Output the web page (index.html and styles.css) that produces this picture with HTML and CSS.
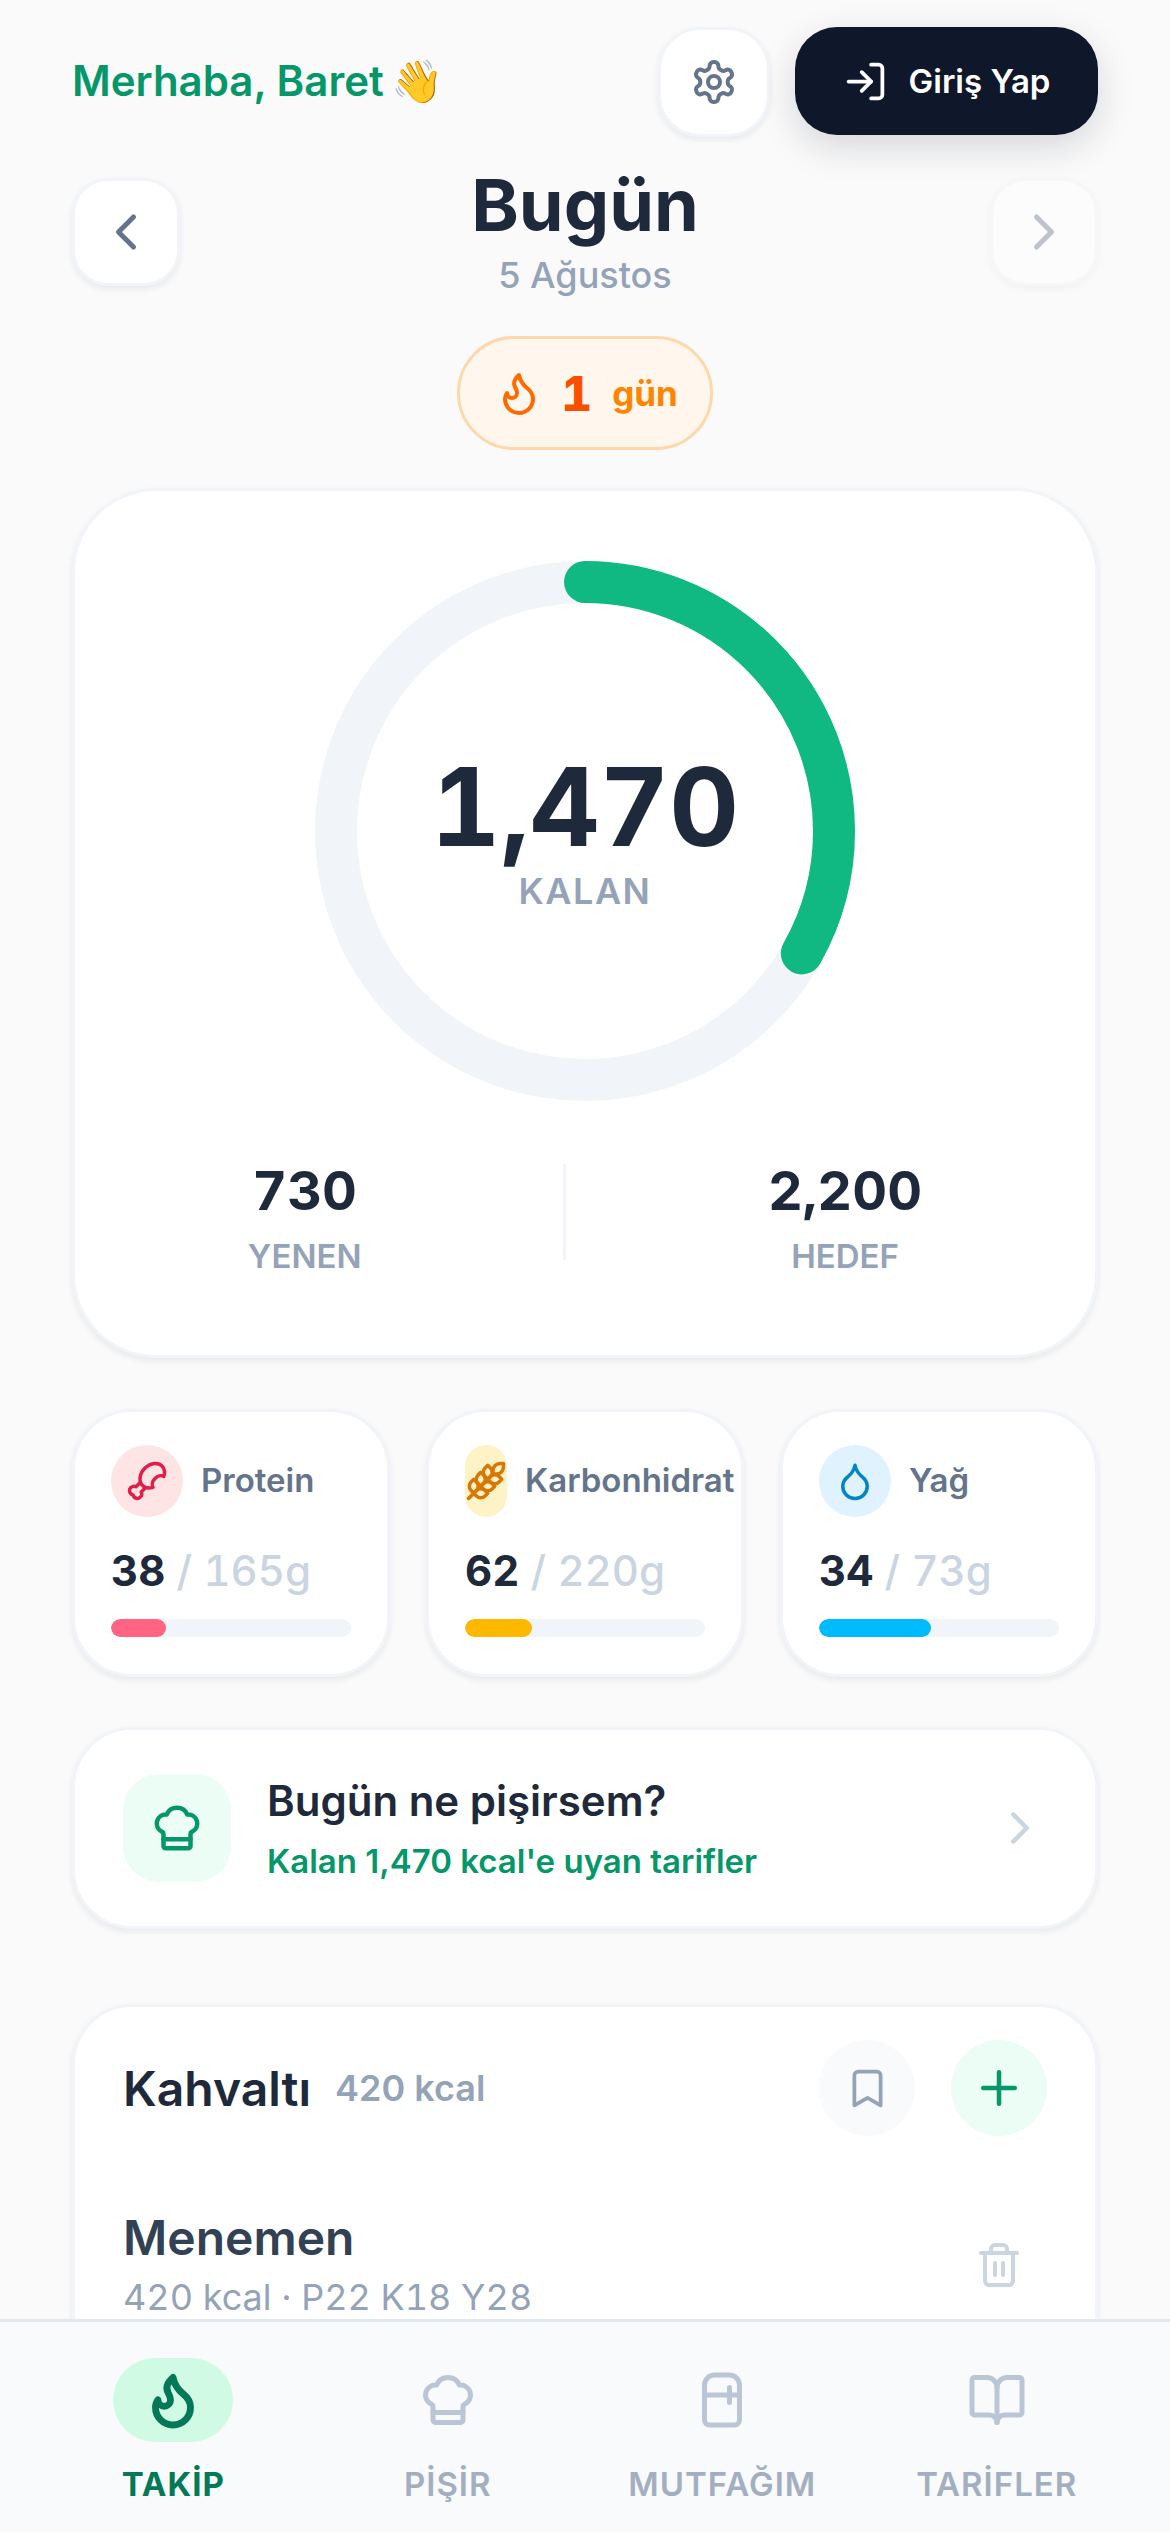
FILE: index.html
```html
<!DOCTYPE html>
<html lang="tr">
<head>
    <meta charset="UTF-8">
    <meta name="viewport" content="width=device-width, initial-scale=1.0">
    <title>Bugün</title>
    <link rel="stylesheet" href="styles.css">
</head>
<body>
    <main class="page">
        <header class="top">
            <div class="greeting">Merhaba, Baret <span class="wave">👋</span></div>
            <button class="settings-btn">
                <svg class="ico" width="48" height="48" viewBox="0 0 24 24"><path d="M12.22 2h-.44a2 2 0 0 0-2 2v.18a2 2 0 0 1-1 1.73l-.43.25a2 2 0 0 1-2 0l-.15-.08a2 2 0 0 0-2.73.73l-.22.38a2 2 0 0 0 .73 2.73l.15.1a2 2 0 0 1 1 1.72v.51a2 2 0 0 1-1 1.74l-.15.09a2 2 0 0 0-.73 2.73l.22.38a2 2 0 0 0 2.73.73l.15-.08a2 2 0 0 1 2 0l.43.25a2 2 0 0 1 1 1.73V20a2 2 0 0 0 2 2h.44a2 2 0 0 0 2-2v-.18a2 2 0 0 1 1-1.73l.43-.25a2 2 0 0 1 2 0l.15.08a2 2 0 0 0 2.73-.73l.22-.39a2 2 0 0 0-.73-2.73l-.15-.08a2 2 0 0 1-1-1.74v-.5a2 2 0 0 1 1-1.74l.15-.09a2 2 0 0 0 .73-2.73l-.22-.38a2 2 0 0 0-2.73-.73l-.15.08a2 2 0 0 1-2 0l-.43-.25a2 2 0 0 1-1-1.73V4a2 2 0 0 0-2-2z"/><circle cx="12" cy="12" r="3"/></svg>
            </button>
            <button class="login-btn">
                <svg class="ico" width="45" height="45" viewBox="0 0 24 24"><path d="M15 3h4a2 2 0 0 1 2 2v14a2 2 0 0 1-2 2h-4"/><path d="m10 17 5-5-5-5"/><path d="M15 12H3"/></svg>
                Giriş Yap
            </button>
        </header>

        <section class="day-row">
            <button class="day-btn">
                <svg class="ico" width="60" height="60" viewBox="0 0 24 24"><path d="m15 18-6-6 6-6"/></svg>
            </button>
            <div class="day-title">
                <h1>Bugün</h1>
                <div class="day-date">5 Ağustos</div>
            </div>
            <button class="day-btn day-btn-off">
                <svg class="ico" width="60" height="60" viewBox="0 0 24 24"><path d="m9 18 6-6-6-6"/></svg>
            </button>
        </section>

        <div class="streak">
            <svg class="ico" width="48" height="48" viewBox="0 0 24 24"><path d="M8.5 14.5A2.5 2.5 0 0 0 11 12c0-1.38-.5-2-1-3-1.072-2.143-.224-4.054 2-6 .5 2.5 2 4.9 4 6.5 2 1.6 3 3.5 3 5.5a7 7 0 1 1-14 0c0-1.153.433-2.294 1-3a2.5 2.5 0 0 0 2.5 2.5z"/></svg>
            <span class="streak-num">1</span>
            <span class="streak-unit">gün</span>
        </div>

        <section class="card summary">
            <div class="ring">
                <svg width="540" height="540" viewBox="0 0 540 540">
                    <circle class="ring-track" cx="270" cy="270" r="249"/>
                    <circle class="ring-fill" cx="270" cy="270" r="249" pathLength="100" stroke-dasharray="33.18 100" transform="rotate(-90 270 270)"/>
                </svg>
                <div class="ring-text">
                    <div class="ring-num">1,470</div>
                    <div class="ring-label">KALAN</div>
                </div>
            </div>
            <div class="stats">
                <div class="stat">
                    <div class="stat-num">730</div>
                    <div class="stat-label">YENEN</div>
                </div>
                <div class="stat-line"></div>
                <div class="stat">
                    <div class="stat-num">2,200</div>
                    <div class="stat-label">HEDEF</div>
                </div>
            </div>
        </section>

        <section class="macros">
            <div class="card macro">
                <div class="macro-head">
                    <span class="macro-icon protein">
                        <svg class="ico" width="42" height="42" viewBox="0 0 24 24"><path d="M15.4 15.63a7.875 6 135 1 1 6.23-6.23 4.5 3.43 135 0 0-6.23 6.23"/><path d="m8.29 12.71-2.6 2.6a2.5 2.5 0 1 0-1.65 4.65A2.5 2.5 0 1 0 8.7 18.3l2.59-2.59"/></svg>
                    </span>
                    <span class="macro-name">Protein</span>
                </div>
                <div class="macro-val">38 <span>/ 165g</span></div>
                <div class="bar"><div class="bar-fill protein-fill" style="width: 23%"></div></div>
            </div>
            <div class="card macro">
                <div class="macro-head">
                    <span class="macro-icon carb">
                        <svg class="ico" width="42" height="42" viewBox="0 0 24 24"><path d="M2 22 16 8"/><path d="M3.47 12.53 5 11l1.53 1.53a3.5 3.5 0 0 1 0 4.94L5 19l-1.53-1.53a3.5 3.5 0 0 1 0-4.94Z"/><path d="M7.47 8.53 9 7l1.53 1.53a3.5 3.5 0 0 1 0 4.94L9 15l-1.53-1.53a3.5 3.5 0 0 1 0-4.94Z"/><path d="M11.47 4.53 13 3l1.53 1.53a3.5 3.5 0 0 1 0 4.94L13 11l-1.53-1.53a3.5 3.5 0 0 1 0-4.94Z"/><path d="M20 2h2v2a4 4 0 0 1-4 4h-2V6a4 4 0 0 1 4-4Z"/><path d="M11.47 17.47 13 19l-1.53 1.53a3.5 3.5 0 0 1-4.94 0L5 19l1.53-1.53a3.5 3.5 0 0 1 4.94 0Z"/><path d="M15.47 13.47 17 15l-1.53 1.53a3.5 3.5 0 0 1-4.94 0L9 15l1.53-1.53a3.5 3.5 0 0 1 4.94 0Z"/><path d="M19.47 9.47 21 11l-1.53 1.53a3.5 3.5 0 0 1-4.94 0L13 11l1.53-1.53a3.5 3.5 0 0 1 4.94 0Z"/></svg>
                    </span>
                    <span class="macro-name">Karbonhidrat</span>
                </div>
                <div class="macro-val">62 <span>/ 220g</span></div>
                <div class="bar"><div class="bar-fill carb-fill" style="width: 28%"></div></div>
            </div>
            <div class="card macro">
                <div class="macro-head">
                    <span class="macro-icon fat">
                        <svg class="ico" width="42" height="42" viewBox="0 0 24 24"><path d="M12 22a7 7 0 0 0 7-7c0-2-1-3.9-3-5.5s-3.5-4-4-6.5c-.5 2.5-2 4.9-4 6.5C6 11.1 5 13 5 15a7 7 0 0 0 7 7z"/></svg>
                    </span>
                    <span class="macro-name">Yağ</span>
                </div>
                <div class="macro-val">34 <span>/ 73g</span></div>
                <div class="bar"><div class="bar-fill fat-fill" style="width: 46.5%"></div></div>
            </div>
        </section>

        <section class="card cook">
            <span class="cook-icon">
                <svg class="ico" width="54" height="54" viewBox="0 0 24 24"><path d="M17 21a1 1 0 0 0 1-1v-5.35c0-.457.316-.844.727-1.041a4 4 0 0 0-2.134-7.589 5 5 0 0 0-9.186 0 4 4 0 0 0-2.134 7.588c.411.198.727.585.727 1.041V20a1 1 0 0 0 1 1Z"/><path d="M6 17h12"/></svg>
            </span>
            <div class="cook-text">
                <div class="cook-title">Bugün ne pişirsem?</div>
                <div class="cook-sub">Kalan 1,470 kcal'e uyan tarifler</div>
            </div>
            <svg class="ico cook-arrow" width="54" height="54" viewBox="0 0 24 24"><path d="m9 18 6-6-6-6"/></svg>
        </section>

        <section class="card meal">
            <div class="meal-head">
                <h2>Kahvaltı</h2>
                <span class="meal-kcal">420 kcal</span>
                <button class="round-btn save-btn">
                    <svg class="ico" width="45" height="45" viewBox="0 0 24 24"><path d="m19 21-7-4-7 4V5a2 2 0 0 1 2-2h10a2 2 0 0 1 2 2v16z"/></svg>
                </button>
                <button class="round-btn add-btn">
                    <svg class="ico" width="54" height="54" viewBox="0 0 24 24"><path d="M5 12h14"/><path d="M12 5v14"/></svg>
                </button>
            </div>
            <div class="meal-item">
                <div class="meal-info">
                    <div class="meal-name">Menemen</div>
                    <div class="meal-meta">420 kcal · P22 K18 Y28</div>
                </div>
                <svg class="ico meal-trash" width="48" height="48" viewBox="0 0 24 24"><path d="M3 6h18"/><path d="M19 6v14c0 1-1 2-2 2H7c-1 0-2-1-2-2V6"/><path d="M8 6V4c0-1 1-2 2-2h4c1 0 2 1 2 2v2"/><path d="M10 11v6"/><path d="M14 11v6"/></svg>
            </div>
        </section>
    </main>

    <nav class="tabs">
        <div class="tab tab-on">
            <span class="tab-icon">
                <svg class="ico" width="60" height="60" viewBox="0 0 24 24"><path d="M8.5 14.5A2.5 2.5 0 0 0 11 12c0-1.38-.5-2-1-3-1.072-2.143-.224-4.054 2-6 .5 2.5 2 4.9 4 6.5 2 1.6 3 3.5 3 5.5a7 7 0 1 1-14 0c0-1.153.433-2.294 1-3a2.5 2.5 0 0 0 2.5 2.5z"/></svg>
            </span>
            TAKİP
        </div>
        <div class="tab">
            <span class="tab-icon">
                <svg class="ico" width="60" height="60" viewBox="0 0 24 24"><path d="M17 21a1 1 0 0 0 1-1v-5.35c0-.457.316-.844.727-1.041a4 4 0 0 0-2.134-7.589 5 5 0 0 0-9.186 0 4 4 0 0 0-2.134 7.588c.411.198.727.585.727 1.041V20a1 1 0 0 0 1 1Z"/><path d="M6 17h12"/></svg>
            </span>
            PİŞİR
        </div>
        <div class="tab">
            <span class="tab-icon">
                <svg class="ico" width="60" height="60" viewBox="0 0 24 24"><path d="M5 6a4 4 0 0 1 4-4h6a4 4 0 0 1 4 4v14a2 2 0 0 1-2 2H7a2 2 0 0 1-2-2V6Z"/><path d="M5 10h14"/><path d="M15 7v6"/></svg>
            </span>
            MUTFAĞIM
        </div>
        <div class="tab">
            <span class="tab-icon">
                <svg class="ico" width="60" height="60" viewBox="0 0 24 24"><path d="M12 7v14"/><path d="M3 18a1 1 0 0 1-1-1V4a1 1 0 0 1 1-1h5a4 4 0 0 1 4 4 4 4 0 0 1 4-4h5a1 1 0 0 1 1 1v13a1 1 0 0 1-1 1h-6a3 3 0 0 0-3 3 3 3 0 0 0-3-3z"/></svg>
            </span>
            TARİFLER
        </div>
    </nav>
</body>
</html>
```

FILE: styles.css
```css
* {
    box-sizing: border-box;
}

html, body {
    margin: 0;
    padding: 0;
    height: 2532px;
    overflow: hidden;
}

body {
    font-family: Inter, "Noto Sans", sans-serif;
    background: #fafafa;
    color: #1e293b;
}

button {
    font-family: inherit;
    border: none;
    padding: 0;
    cursor: pointer;
}

h1, h2 {
    margin: 0;
}

.ico {
    display: block;
    flex: none;
    fill: none;
    stroke: currentColor;
    stroke-width: 2;
    stroke-linecap: round;
    stroke-linejoin: round;
}

.page {
    padding: 27px 72px 0;
}

.card {
    background: #fff;
    border: 3px solid #f1f5f9;
    box-shadow: 0 3px 6px rgba(15, 23, 42, 0.08);
}

/* top bar */
.top {
    display: flex;
    align-items: flex-start;
    height: 110px;
    margin-bottom: 41px;
}

.greeting {
    flex: 1;
    font-size: 42px;
    font-weight: 600;
    line-height: 108px;
    color: #059669;
}

.wave {
    margin-left: -3px;
}

.settings-btn {
    width: 112px;
    height: 110px;
    margin-right: 25px;
    border: 3px solid #f1f5f9;
    border-radius: 42px;
    background: #fff;
    color: #64748b;
    display: flex;
    align-items: center;
    justify-content: center;
    box-shadow: 0 3px 6px rgba(15, 23, 42, 0.08);
}

.login-btn {
    width: 303px;
    height: 108px;
    border-radius: 42px;
    background: #0f172a;
    color: #fff;
    font-size: 33px;
    font-weight: 600;
    display: flex;
    align-items: center;
    justify-content: center;
    gap: 21px;
    box-shadow: 0 12px 36px rgba(15, 23, 42, 0.15);
}

/* day switcher */
.day-row {
    display: flex;
    justify-content: space-between;
    align-items: flex-start;
}

.day-btn {
    width: 108px;
    height: 108px;
    border: 3px solid #f1f5f9;
    border-radius: 36px;
    background: #fff;
    color: #64748b;
    display: flex;
    align-items: center;
    justify-content: center;
    box-shadow: 0 3px 6px rgba(15, 23, 42, 0.08);
}

.day-btn-off {
    opacity: 0.4;
}

.day-title {
    text-align: center;
}

.day-title h1 {
    font-size: 72px;
    font-weight: 700;
    line-height: 54px;
}

.day-date {
    margin-top: 22px;
    font-size: 36px;
    font-weight: 500;
    line-height: 42px;
    color: #94a3b8;
}

.streak {
    width: 256px;
    height: 114px;
    margin: 40px auto 38px;
    padding-left: 3px;
    border: 3px solid #fed7aa;
    border-radius: 57px;
    background: #fff7ed;
    display: flex;
    align-items: center;
    justify-content: center;
    color: #ff6a00;
}

.streak-num {
    margin-left: 18px;
    font-size: 48px;
    font-weight: 800;
    font-variant-numeric: tabular-nums;
    color: #fb4f00;
}

.streak-unit {
    margin-left: 20px;
    font-size: 35px;
    font-weight: 700;
    color: #ff8500;
}

/* calories */
.summary {
    height: 870px;
    border-radius: 84px;
    padding: 70px 72px 0;
    display: flex;
    flex-direction: column;
    align-items: center;
}

.ring {
    display: grid;
    place-items: center;
}

.ring svg, .ring-text {
    grid-area: 1 / 1;
}

.ring-track, .ring-fill {
    fill: none;
    stroke-width: 42;
}

.ring-track {
    stroke: #f1f5f9;
}

.ring-fill {
    stroke: #10b981;
    stroke-linecap: round;
}

.ring-text {
    padding-top: 4px;
    text-align: center;
}

.ring-num {
    font-size: 108px;
    font-weight: 700;
    line-height: 108px;
    font-variant-numeric: tabular-nums;
}

.ring-label {
    margin-top: 8px;
    font-size: 36px;
    font-weight: 600;
    line-height: 44px;
    letter-spacing: 1.5px;
    color: #94a3b8;
}

.stats {
    width: 100%;
    margin-top: 57px;
    display: flex;
    justify-content: space-around;
    align-items: center;
}

.stat {
    text-align: center;
}

.stat-num {
    font-size: 54px;
    font-weight: 700;
    line-height: 66px;
    font-variant-numeric: tabular-nums;
}

.stat-label {
    margin-top: 12px;
    font-size: 33px;
    font-weight: 600;
    line-height: 40px;
    color: #94a3b8;
}

.stat-line {
    width: 3px;
    height: 96px;
    margin-bottom: 10px;
    background: #f1f5f9;
}

/* macros */
.macros {
    margin-top: 51px;
    display: grid;
    grid-template-columns: repeat(3, 1fr);
    gap: 36px;
}

.macro {
    height: 268px;
    border-radius: 60px;
    padding: 33px 36px 0;
    min-width: 0;
}

.macro-head {
    display: flex;
    align-items: center;
    gap: 18px;
    white-space: nowrap;
}

.macro-icon {
    width: 72px;
    height: 72px;
    border-radius: 36px;
    display: flex;
    align-items: center;
    justify-content: center;
}

.protein {
    background: #ffe4e6;
    color: #e11d48;
}

.carb {
    background: #fef3c7;
    color: #d97706;
}

.fat {
    background: #e0f2fe;
    color: #0284c7;
}

.macro-name {
    margin-bottom: 3px;
    font-size: 33px;
    font-weight: 600;
    color: #64748b;
}

.macro-val {
    margin-top: 28px;
    font-size: 42px;
    font-weight: 700;
    line-height: 52px;
    font-variant-numeric: tabular-nums;
}

.macro-val span {
    font-weight: 500;
    color: #cbd5e1;
}

.bar {
    margin-top: 22px;
    height: 18px;
    border-radius: 9px;
    background: #f1f5f9;
    overflow: hidden;
}

.bar-fill {
    height: 100%;
    border-radius: 9px;
}

.protein-fill {
    background: #ff6482;
}

.carb-fill {
    background: #ffb800;
}

.fat-fill {
    background: #00bbff;
}

/* cook suggestion */
.cook {
    margin-top: 50px;
    height: 202px;
    border-radius: 60px;
    padding: 0 48px;
    display: flex;
    align-items: center;
    gap: 36px;
}

.cook-icon {
    width: 108px;
    height: 108px;
    border-radius: 36px;
    background: #ecfdf5;
    color: #059669;
    display: flex;
    align-items: center;
    justify-content: center;
}

.cook-text {
    flex: 1;
}

.cook-title {
    font-size: 42px;
    font-weight: 600;
    line-height: 52px;
}

.cook-sub {
    margin-top: 14px;
    font-size: 33px;
    font-weight: 600;
    line-height: 40px;
    color: #059669;
}

.cook-arrow {
    color: #cbd5e1;
}

/* meals */
.meal {
    margin-top: 75px;
    height: 500px;
    border-radius: 60px;
    padding: 33px 48px 0;
}

.meal-head {
    display: flex;
    align-items: center;
    height: 96px;
}

.meal-head h2 {
    font-size: 48px;
    font-weight: 600;
}

.meal-kcal {
    flex: 1;
    margin-left: 24px;
    font-size: 36px;
    font-weight: 600;
    color: #94a3b8;
}

.round-btn {
    width: 96px;
    height: 96px;
    border-radius: 50%;
    display: flex;
    align-items: center;
    justify-content: center;
}

.save-btn {
    background: #f8fafc;
    color: #94a3b8;
}

.add-btn {
    margin-left: 36px;
    background: #ecfdf5;
    color: #059669;
}

.meal-item {
    margin-top: 74px;
    display: flex;
    align-items: center;
}

.meal-info {
    flex: 1;
}

.meal-name {
    font-size: 48px;
    font-weight: 600;
    line-height: 56px;
    color: #334155;
}

.meal-meta {
    margin-top: 9px;
    font-size: 36px;
    line-height: 44px;
    font-variant-numeric: tabular-nums;
    color: #94a3b8;
}

.meal-trash {
    margin-right: 24px;
    color: #cbd5e1;
}

/* bottom nav */
.tabs {
    position: fixed;
    left: 0;
    right: 0;
    bottom: 0;
    height: 213px;
    padding: 36px 36px 0;
    border-top: 3px solid #e2e8f0;
    background: #f8fafc;
    display: grid;
    grid-template-columns: repeat(4, 1fr);
}

.tab {
    display: flex;
    flex-direction: column;
    align-items: center;
    font-size: 33px;
    font-weight: 600;
    line-height: 40px;
    letter-spacing: 1px;
    color: #a3afc0;
}

.tab-icon {
    width: 120px;
    height: 84px;
    margin-bottom: 22px;
    border-radius: 42px;
    display: flex;
    align-items: center;
    justify-content: center;
    color: #bac6d6;
}

.tab-on {
    font-weight: 700;
    color: #047857;
}

.tab-on .tab-icon {
    background: #d1fae5;
    color: #047857;
}

.tab-on .ico {
    stroke-width: 2.75;
}
```
